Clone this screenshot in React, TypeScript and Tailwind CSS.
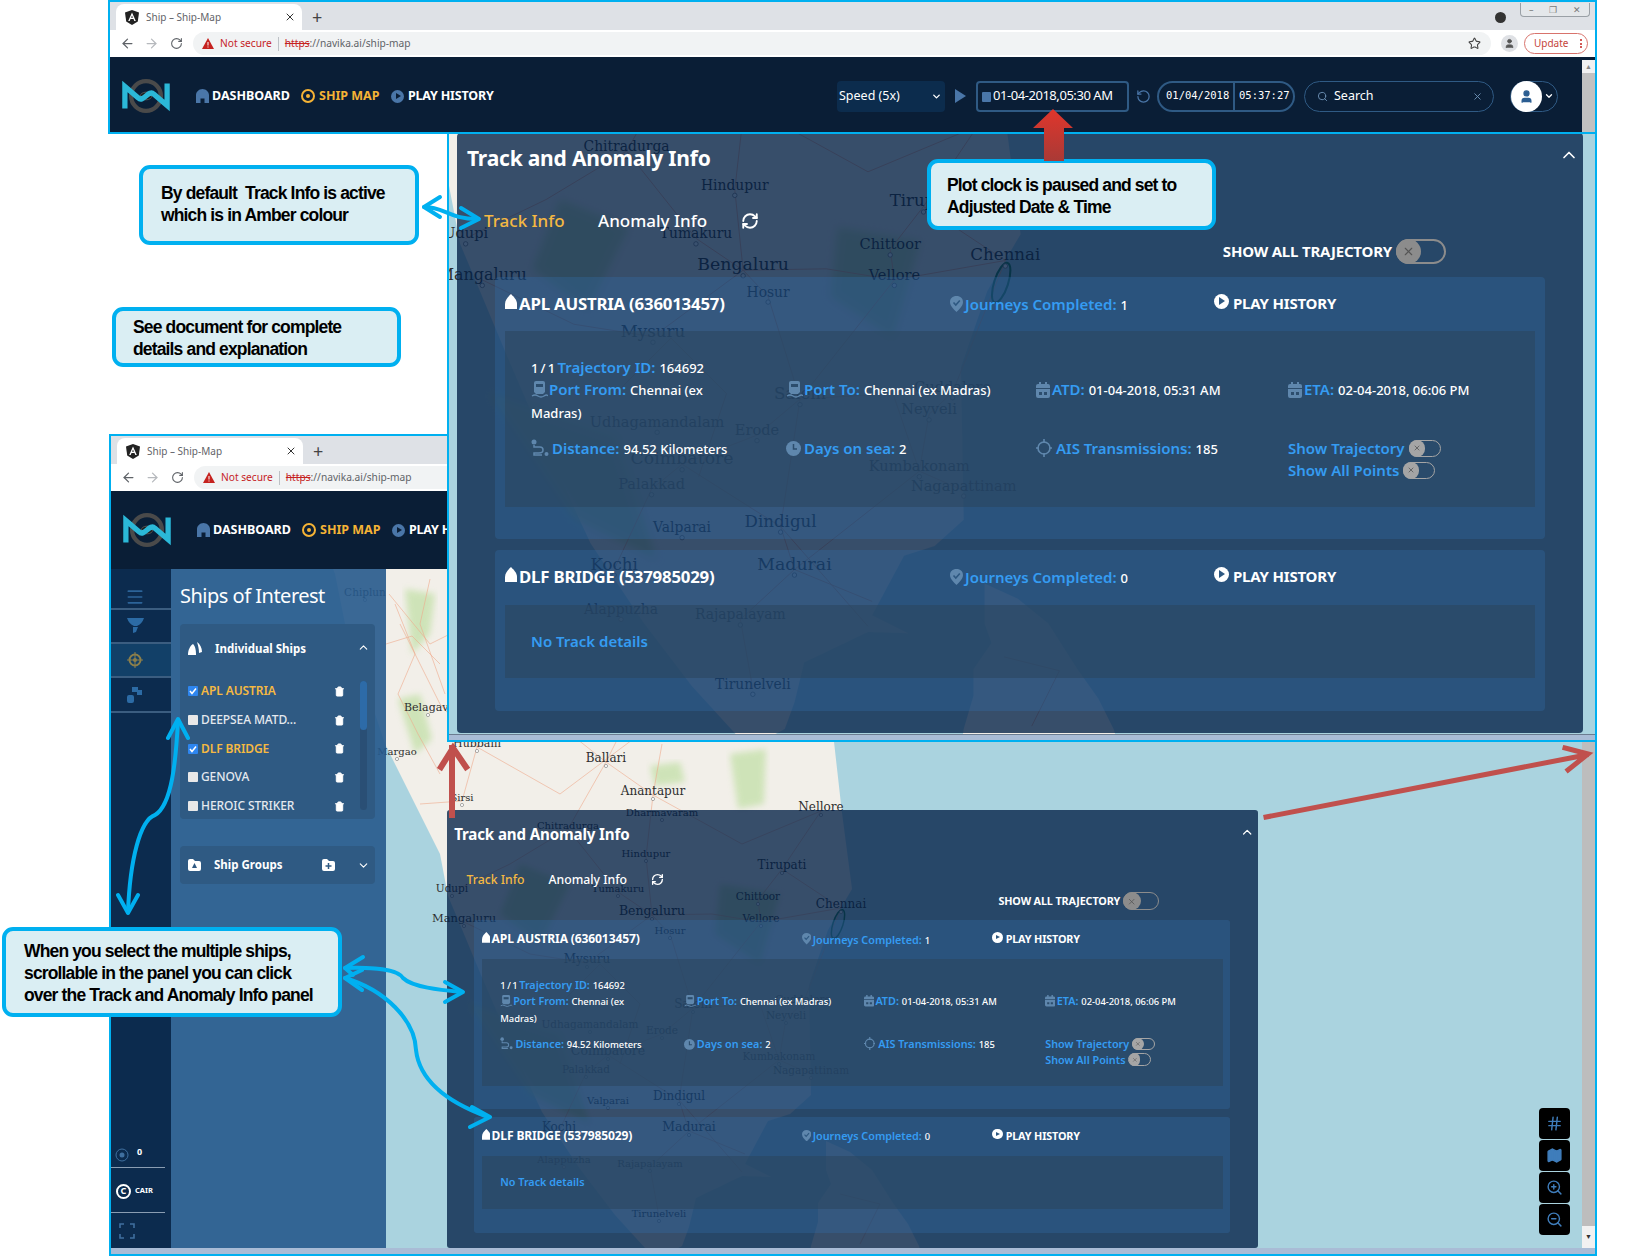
import { ArrowLeft, ArrowRight, ChevronDown, ChevronUp, Hash, Map as MapIcon, Menu, RefreshCw, RotateCw, Search, Star, Trash2, User, X, ZoomIn, ZoomOut } from "lucide-react";

const sans = "[font-family:'Noto_Sans',sans-serif]";

const coast =
  "M300 480 L335 570 L345 620 L365 680 L385 740 L405 780 L425 820 L440 850 L448 892 L459 918 L481 971 L515 1050 L542 1108 L580 1165 L615 1211 L656 1256 L682 1242 L689 1223 L696 1194 L742 1172 L771 1173 L745 1160 L768 1117 L790 1110 L811 1091 L809 981 L828 926 L852 885 L842 809 L832 720 L900 560 L950 480 Z";
const lanka = "M826 1137 L850 1148 L872 1166 L893 1199 L908 1220 L919 1242 L925 1262 L808 1262 L811 1242 L818 1218 L818 1199 L831 1180 L826 1166 Z";

const greens = [
  "M405 585 L435 590 L430 630 L412 650 Z",
  "M398 695 L420 690 L432 735 L415 750 Z",
  "M650 762 L680 758 L685 778 L655 782 Z",
  "M730 750 L766 745 L764 800 L738 805 Z",
  "M520 860 L570 880 L540 940 L500 910 Z",
  "M470 1000 L560 1030 L590 1120 L530 1090 Z",
  "M720 880 L780 890 L760 960 L715 930 Z",
];
const roads = [
  "M389 590 L430 640 L470 620 L520 690 L606 758 L653 791 L742 840 L821 807",
  "M400 620 L440 700 L477 743 L560 790 L600 760 L680 700",
  "M420 800 L462 797 L477 743 L510 680 L560 600",
  "M395 600 L415 650 L398 690 L418 730 L440 770",
  "M386 640 L412 632 L440 660 M430 575 L420 620 L445 690",
  "M452 888 L510 860 L568 825 L606 758 L640 690",
  "M464 918 L530 950 L587 959 L652 911 L618 888 L568 825",
  "M652 911 L646 853 L653 791 L662 740",
  "M652 911 L670 930 L693 1004 L662 1030 L608 1051 L586 1069 L559 1127",
  "M693 1004 L761 918 L758 896 L782 865 L821 807",
  "M841 904 L761 918 L712 910 L652 911",
  "M841 904 L803 999 L786 1015 L779 1056 L811 1070",
  "M693 1004 L679 1096 L689 1127 L650 1163 L659 1213",
  "M689 1127 L779 1056 L760 1000 L693 1004",
  "M782 865 L841 904",
  "M689 1127 L745 1150",
  "M608 1051 L679 1096 L742 1168",
  "M560 1000 L600 960 L640 1000 L620 1060",
  "M840 1190 L880 1200 L860 1240",
];
const places: [string, number, number, number][] = [
  ["Chiplun", 365, 592, 10.5],
  ["Belagavi", 428, 707, 11],
  ["Margao", 397, 751, 10],
  ["Hubballi", 477, 743, 11],
  ["Ballari", 606, 758, 12],
  ["Anantapur", 653, 791, 12],
  ["Sirsi", 462, 797, 10],
  ["Nellore", 821, 807, 12],
  ["Dharmavaram", 662, 812, 10],
  ["Chitradurga", 568, 825, 10],
  ["Hindupur", 646, 853, 10],
  ["Tirupati", 782, 865, 12],
  ["Tumakuru", 618, 888, 10],
  ["Udupi", 452, 888, 10.5],
  ["Chittoor", 758, 896, 10.5],
  ["Chennai", 841, 904, 12],
  ["Bengaluru", 652, 911, 12.5],
  ["Vellore", 761, 918, 10.5],
  ["Mangaluru", 464, 918, 11.5],
  ["Hosur", 670, 930, 10],
  ["Mysuru", 587, 959, 12],
  ["Salem", 693, 1004, 12],
  ["Cuddalore", 803, 999, 10.5],
  ["Neyveli", 786, 1015, 10.5],
  ["Udhagamandalam", 590, 1024, 10.5],
  ["Erode", 662, 1030, 10.5],
  ["Coimbatore", 608, 1051, 12.5],
  ["Kumbakonam", 779, 1056, 10.5],
  ["Palakkad", 586, 1069, 10.5],
  ["Nagapattinam", 811, 1070, 10.5],
  ["Dindigul", 679, 1096, 12],
  ["Valparai", 608, 1100, 10],
  ["Kochi", 559, 1127, 12],
  ["Madurai", 689, 1127, 12.5],
  ["Alappuzha", 564, 1159, 10],
  ["Rajapalayam", 650, 1163, 10],
  ["Tirunelveli", 659, 1213, 10],
];

function MapArt({ viewBox, minY = 0 }: { viewBox: string; minY?: number }) {
  return (
    <svg viewBox={viewBox} preserveAspectRatio="none" className="absolute inset-0 h-full w-full">
      <defs>
        <filter id="soft">
          <feGaussianBlur stdDeviation="3" />
        </filter>
      </defs>
      <rect x="0" y="0" width="1700" height="1300" fill="#aad3df" />
      <path d={coast} fill="#f2efe9" />
      <path d={lanka} fill="#f2efe9" />
      {greens.map((d) => (
        <path key={d} d={d} fill="#c3e0a8" opacity="0.75" filter="url(#soft)" />
      ))}
      {roads.map((d) => (
        <path key={d} d={d} fill="none" stroke="#efa98c" strokeWidth="0.6" />
      ))}
      <ellipse cx="838" cy="920" rx="5" ry="15" fill="none" stroke="#1e7a4c" strokeWidth="1.5" transform="rotate(18 838 920)" />
      {places
        .filter((p) => p[2] >= minY)
        .map(([name, x, y, size]) => (
          <g key={name}>
            <circle cx={x} cy={y + 4} r="1.6" fill="#fff" stroke="#777" strokeWidth="0.6" />
            <text x={x} y={y} fontSize={size} textAnchor="middle" fill="#2e2e2e" fontFamily="'DejaVu Serif', serif">
              {name}
            </text>
          </g>
        ))}
    </svg>
  );
}

function AngularMark() {
  return (
    <svg width="14" height="15" viewBox="0 0 14 15">
      <path d="M7 0 L14 2.5 L12.8 11.5 L7 15 L1.2 11.5 L0 2.5 Z" fill="#222" />
      <path d="M7 2.5 L10.8 11 H9.3 L8.5 9 H5.5 L4.7 11 H3.2 Z M6.1 7.7 H7.9 L7 5.5 Z" fill="#fff" fillRule="evenodd" />
    </svg>
  );
}

function BrowserChrome() {
  return (
    <div className={`${sans} shrink-0`}>
      <div className="flex h-[28px] items-end bg-[#dee1e6] pl-[6px]">
        <div className="flex h-[26px] w-[186px] items-center gap-[7px] rounded-t-lg bg-white pl-[9px] pr-[6px] text-[10px] text-[#5f6368]">
          <AngularMark />
          <span>Ship – Ship-Map</span>
          <X size={12} className="ml-auto text-[#333]" />
        </div>
        <span className="mb-[2px] ml-[10px] text-[18px] leading-[22px] text-[#444]">+</span>
      </div>
      <div className="flex h-[27px] items-center bg-white pl-[10px] pr-[7px]">
        <ArrowLeft size={15} className="text-[#5f6368]" />
        <ArrowRight size={15} className="ml-[9px] text-[#b6b9bd]" />
        <RotateCw size={13} className="ml-[11px] text-[#5f6368]" />
        <div className="ml-[10px] flex h-[23px] flex-1 items-center rounded-full bg-[#f1f3f4] pl-[9px] pr-[6px] text-[10.2px] text-[#5f6368]">
          <svg width="12" height="11" viewBox="0 0 12 11">
            <path d="M6 0 L12 11 H0 Z" fill="#c5221f" />
            <path d="M5.5 4 H6.5 V7.5 H5.5 Z M5.5 8.5 H6.5 V9.5 H5.5 Z" fill="#fff" />
          </svg>
          <span className="ml-[6px] text-[#c5221f]">Not secure</span>
          <span className="mx-[6px] h-[14px] w-px bg-[#bdc1c6]" />
          <span className="text-[#c5221f] line-through">https</span>
          <span>://navika.ai/ship-map</span>
          <Star size={13} className="ml-auto mr-[4px] text-[#444]" />
        </div>
        <div className="ml-[10px] flex h-[17px] w-[17px] items-center justify-center rounded-full bg-[#dfe1e5]">
          <User size={11} fill="#555" className="text-[#555]" />
        </div>
        <div className="ml-[6px] flex h-[21px] w-[64px] items-center justify-between rounded-full border border-[#d8736c] pl-[9px] pr-[5px] text-[10px] text-[#c5443a]">
          Update
          <span className="flex flex-col gap-[1.5px]">
            <i className="block h-[2px] w-[2px] rounded-full bg-[#c5221f]" />
            <i className="block h-[2px] w-[2px] rounded-full bg-[#c5221f]" />
            <i className="block h-[2px] w-[2px] rounded-full bg-[#c5221f]" />
          </span>
        </div>
      </div>
    </div>
  );
}

function NavikaLogo() {
  return (
    <svg width="48" height="36" viewBox="0 0 50 36" className="shrink-0">
      <circle cx="25" cy="18" r="15.5" fill="none" stroke="#4a4a4a" strokeWidth="4.5" />
      <ellipse cx="25" cy="18" rx="6" ry="4" fill="#1c1c1c" stroke="#555" />
      <path d="M3 31 V8 L17 20 C22 25 28 11 33 16 L47 28 V5" fill="none" stroke="#2bb8d8" strokeWidth="5.5" strokeLinejoin="miter" />
      <circle cx="25" cy="18" r="2" fill="#2bb8d8" />
    </svg>
  );
}

function AppBar({ className }: { className: string }) {
  return (
    <div className={`${sans} flex shrink-0 items-center bg-[#0a1e36] pl-[12px] text-white ${className}`}>
      <NavikaLogo />
      <div className="ml-[26px] flex items-center text-[12.5px] font-bold">
        <svg width="13" height="14" viewBox="0 0 13 14">
          <path d="M6.5 0 C3 0 0 3 0 6 V14 H4.5 V9.5 H8.5 V14 H13 V6 C13 3 10 0 6.5 0 Z" fill="#4a76a8" />
        </svg>
        <span className="ml-[3px] w-[89px]">DASHBOARD</span>
        <span className="flex h-[14px] w-[14px] items-center justify-center rounded-full border-2 border-[#f5b335]">
          <i className="block h-[4px] w-[4px] rounded-full bg-[#f5b335]" />
        </span>
        <span className="ml-[4px] w-[72px] text-[#f5b335]">SHIP MAP</span>
        <span className="flex h-[13px] w-[13px] items-center justify-center rounded-full bg-[#4a76a8]">
          <i className="ml-px block border-y-[3px] border-l-[5px] border-y-transparent border-l-[#0a1e36]" />
        </span>
        <span className="ml-[4px] tracking-[-0.2px]">PLAY HISTORY</span>
      </div>
      <div className="ml-auto flex h-[31px] items-center">
        <div className="flex h-[31px] w-[108px] items-center justify-between rounded bg-[#0c2c4d] pl-[2px] pr-[3px] text-[12.5px]">
          Speed (5x)
          <ChevronDown size={11} strokeWidth={3} />
        </div>
        <i className="ml-[10px] block border-y-[7px] border-l-[11px] border-y-transparent border-l-[#4a76a8]" />
        <div className="ml-[10px] flex h-[31px] w-[153px] items-center gap-[2px] rounded-sm border-2 border-[#2f5a84] pl-[4px] text-[13px] tracking-[-0.45px]">
          <svg width="9" height="11" viewBox="0 0 9 11">
            <path d="M1 1 H8 Q9 1 9 2 V10 Q9 11 8 11 H1 Q0 11 0 10 V2 Q0 1 1 1 Z" fill="#4a76a8" />
          </svg>
          01-04-2018,05:30 AM
        </div>
        <RotateCw size={15} className="ml-[7px] -scale-x-100 text-[#4a76a8]" />
        <div className="ml-[6px] flex h-[31px] w-[138px] items-center rounded-full border-2 border-[#2f5a84] font-['DejaVu_Sans_Mono',monospace] text-[10.5px]">
          <span className="w-[74px] pl-[7px]">01/04/2018</span>
          <span className="h-full w-[2px] bg-[#2f5a84]" />
          <span className="pl-[4px]">05:37:27</span>
        </div>
        <div className="ml-[9px] flex h-[31px] w-[190px] items-center rounded-full border border-[#2f5a84] pl-[12px] pr-[10px] text-[12.5px]">
          <Search size={11} className="text-[#6f93b8]" />
          <span className="ml-[6px]">Search</span>
          <X size={11} className="ml-auto text-[#6f93b8]" />
        </div>
        <div className="ml-[16px] flex h-[31px] w-[48px] items-center rounded-full border border-[#2f5a84]">
          <span className="flex h-[31px] w-[31px] items-center justify-center rounded-full bg-white">
            <User size={15} fill="#2b5d91" className="text-[#2b5d91]" />
          </span>
          <ChevronDown size={10} strokeWidth={3} className="ml-[2px]" />
        </div>
      </div>
      <div className="ml-[24px] flex h-full w-[13px] flex-col bg-[#f1f1f1]">
        <span className="h-[13px] text-center text-[7px] leading-[13px] text-[#888]">▲</span>
        <span className="flex-1 bg-[#c1c1c1]" />
      </div>
    </div>
  );
}

function ShipGlyph({ className = "" }: { className?: string }) {
  return (
    <svg width="12" height="15" viewBox="0 0 12 15" className={className}>
      <path d="M6 0 C9 3 12 6 12 10 V15 H0 V10 C0 6 3 3 6 0 Z" fill="#fff" />
    </svg>
  );
}

function PlayDot() {
  return (
    <span className="-mt-[5px] flex h-[15px] w-[15px] items-center justify-center rounded-full bg-white">
      <i className="ml-px block border-y-[4px] border-l-[6px] border-y-transparent border-l-[#2e5881]" />
    </span>
  );
}

function Toggle({ big }: { big?: boolean }) {
  return big ? (
    <div className="flex h-[25px] w-[50px] items-center rounded-full border-2 border-[#8c8c8c]">
      <span className="-ml-[2px] flex h-[25px] w-[25px] items-center justify-center rounded-full bg-[#8c8c8c] text-[#555]">
        <X size={13} />
      </span>
    </div>
  ) : (
    <div className="flex h-[17px] w-[32px] items-center rounded-full border border-[#a5a5a5]">
      <span className="-ml-px flex h-[17px] w-[16px] items-center justify-center rounded-full bg-[#a5a5a5] text-[#666]">
        <X size={8} strokeWidth={3} />
      </span>
    </div>
  );
}

function CalendarIcon() {
  return (
    <svg width="14" height="16" viewBox="0 0 14 16" className="mr-[2px] inline align-[-3px]">
      <path d="M3 0 H5 V2 H9 V0 H11 V2 H12 Q14 2 14 4 V14 Q14 16 12 16 H2 Q0 16 0 14 V4 Q0 2 2 2 H3 Z" fill="#5f87ad" />
      <path d="M0 6 H14 V7 H0 Z M3 10 H6 V13 H3 Z M8 10 H11 V13 H8 Z" fill="#2c4d6d" />
    </svg>
  );
}

function PortIcon() {
  return (
    <svg width="17" height="17" viewBox="0 0 17 17" className="mr-[1px] inline align-[-3px]">
      <path d="M5 0 H12 Q14 0 14 2 V11 L12 13 H5 L3 11 V2 Q3 0 5 0 Z" fill="#5f87ad" />
      <path d="M5 3 H12 V6 H5 Z" fill="#2c4d6d" />
      <path d="M1 15 Q4 13 7 15 T13 15 T17 15" fill="none" stroke="#5f87ad" strokeWidth="1.3" />
    </svg>
  );
}

function Label({ text, value }: { text: string; value?: string }) {
  return (
    <>
      <span className="text-[15px] font-semibold text-[#359cf2]">{text}</span>
      {value ? <span className="ml-[4px] text-[13px] font-medium text-white">{value}</span> : null}
    </>
  );
}

function ShipHeader({ name, journeys }: { name: string; journeys: string }) {
  return (
    <div className="flex h-[53px] items-center pl-[10px] pr-[10px] text-white">
      <ShipGlyph className="-mt-[4px] shrink-0" />
      <span className="ml-[2px] w-[431px] text-[16.8px] font-bold tracking-[-0.2px]">{name}</span>
      <svg width="13" height="16" viewBox="0 0 13 16" className="shrink-0">
        <path d="M6.5 0 C10.5 0 13 2.5 13 6 C13 10 9 13.5 6.5 16 C4 13.5 0 10 0 6 C0 2.5 2.5 0 6.5 0 Z" fill="#5f87ad" />
        <path d="M3.5 6.5 L5.8 9 L9.8 4.5" fill="none" stroke="#2e5881" strokeWidth="1.6" />
      </svg>
      <span className="ml-[2px] w-[249px]">
        <Label text="Journeys Completed:" value={journeys} />
      </span>
      <PlayDot />
      <span className="ml-[4px] text-[15px] font-bold tracking-[-0.2px]">PLAY HISTORY</span>
    </div>
  );
}

function TrackPanel({ className }: { className: string }) {
  return (
    <div className={`${sans} w-[1126px] rounded-sm bg-[#022047]/[.78] text-white ${className}`}>
      <h2 className="relative pl-[10px] pt-[12px] text-[21px] font-bold leading-[26px] tracking-[-0.2px]">
        Track and Anomaly Info
        <ChevronUp size={20} className="absolute right-[4px] top-[12px]" />
      </h2>
      <div className="mt-[38px] flex h-[24px] items-center pl-[27px] text-[17px] font-medium">
        <span className="w-[114px] text-[#f5b942]">Track Info</span>
        <span className="w-[143px]">Anomaly Info</span>
        <RefreshCw size={18} strokeWidth={2.5} />
      </div>
      <div className="mr-[137px] mt-[6px] flex h-[24px] items-center justify-end gap-[4px] text-[15px] font-bold tracking-[-0.2px]">
        SHOW ALL TRAJECTORY
        <Toggle big />
      </div>
      <section className="mx-[38px] mt-[14px] h-[262px] rounded-sm bg-[#3272af]/30">
        <ShipHeader name="APL AUSTRIA (636013457)" journeys="1" />
        <div className="mx-[10px] mt-px h-[176px] bg-[#2b465f]/60 pl-[26px] pt-[25px] leading-[22px]">
          <div className="h-[22px]">
            <span className="text-[13px] font-medium tracking-[-0.6px]">1 / 1 </span>
            <Label text="Trajectory ID:" value="164692" />
          </div>
          <div className="grid grid-cols-[255px_250px_252px_1fr]">
            <div className="pr-[60px]">
              <PortIcon />
              <Label text="Port From:" value="Chennai (ex Madras)" />
            </div>
            <div>
              <PortIcon />
              <Label text="Port To:" value="Chennai (ex Madras)" />
            </div>
            <div>
              <CalendarIcon />
              <Label text="ATD:" value="01-04-2018, 05:31 AM" />
            </div>
            <div>
              <CalendarIcon />
              <Label text="ETA:" value="02-04-2018, 06:06 PM" />
            </div>
          </div>
          <div className="mt-[13px] grid grid-cols-[255px_250px_252px_1fr]">
            <div className="flex items-start">
              <svg width="18" height="18" viewBox="0 0 18 18" className="mr-[3px] mt-[2px]">
                <circle cx="3" cy="3" r="2.5" fill="#5f87ad" />
                <circle cx="15.5" cy="15" r="2" fill="#5f87ad" />
                <path d="M3 6 V8 H9 Q12 8 12 11 T8 14 H3 V16 H11" fill="none" stroke="#5f87ad" strokeWidth="1.5" />
              </svg>
              <span>
                <Label text="Distance:" value="94.52 Kilometers" />
              </span>
            </div>
            <div className="flex items-start">
              <svg width="15" height="15" viewBox="0 0 15 15" className="mr-[3px] mt-[4px]">
                <circle cx="7.5" cy="7.5" r="7.5" fill="#5f87ad" />
                <path d="M7.5 3 V8 H11" fill="none" stroke="#2c4d6d" strokeWidth="1.5" />
              </svg>
              <span>
                <Label text="Days on sea:" value="2" />
              </span>
            </div>
            <div className="flex items-start">
              <svg width="16" height="18" viewBox="0 0 16 18" className="mr-[4px] mt-[2px]">
                <circle cx="8" cy="9" r="6" fill="none" stroke="#5f87ad" strokeWidth="1.6" />
                <path d="M8 0 V4 M8 14 V18 M0 9 H3 M13 9 H16" stroke="#5f87ad" strokeWidth="1.6" />
              </svg>
              <span>
                <Label text="AIS Transmissions:" value="185" />
              </span>
            </div>
            <div>
              <div className="flex h-[22px] items-center gap-[4px]">
                <Label text="Show Trajectory" />
                <Toggle />
              </div>
              <div className="flex h-[22px] items-center gap-[4px]">
                <Label text="Show All Points" />
                <Toggle />
              </div>
            </div>
          </div>
        </div>
      </section>
      <section className="mx-[38px] mt-[11px] h-[161px] rounded-sm bg-[#3272af]/30">
        <ShipHeader name="DLF BRIDGE (537985029)" journeys="0" />
        <div className="mx-[10px] mt-[2px] flex h-[73px] items-center bg-[#2b465f]/60 pl-[26px]">
          <Label text="No Track details" />
        </div>
      </section>
    </div>
  );
}

function Sidebar() {
  return (
    <aside className={`${sans} relative flex w-[60px] shrink-0 flex-col bg-[#0c2b4e] text-[#2c6499]`}>
      <div className="flex h-[41px] items-end justify-center border-b-2 border-[#3b5d80] pb-px pr-[12px]">
        <Menu size={20} />
      </div>
      <div className="flex h-[34px] items-center justify-center border-b-2 border-[#3b5d80] pr-[12px]">
        <svg width="17" height="16" viewBox="0 0 17 16">
          <path d="M0 0 H17 Q15 6 10 8 H7 Q2 6 0 0 Z M6 9 H11 L9 14 L6 15 Z" fill="#2c6ba5" />
        </svg>
      </div>
      <div className="flex h-[34px] items-center justify-center border-b-2 border-[#3b5d80] bg-[#124068] pr-[12px]">
        <svg width="16" height="16" viewBox="0 0 16 16">
          <circle cx="8" cy="8" r="5.5" fill="none" stroke="#8c7f4a" strokeWidth="2" />
          <circle cx="8" cy="8" r="2" fill="#8c7f4a" />
          <path d="M8 0 V16 M0 8 H16" stroke="#8c7f4a" strokeWidth="1" />
        </svg>
      </div>
      <div className="flex h-[35px] items-center justify-center border-b-2 border-[#3b5d80] pr-[12px]">
        <svg width="16" height="16" viewBox="0 0 16 16">
          <path d="M5 0 H11 V3 H15 V8 H10 V5 H5 Z M0 10 Q0 8 2 8 H5 Q7 8 7 10 V14 Q7 16 5 16 H2 Q0 16 0 14 Z" fill="#2c6ba5" />
        </svg>
      </div>
      <div className="mb-[6px] mt-auto">
        <div className="mr-[6px] flex h-[34px] items-start border-b border-[#8a9db2] pl-[4px] pt-[11px] text-[9px] font-bold text-white">
          <svg width="14" height="14" viewBox="0 0 14 14" className="mt-[3px]">
            <circle cx="7" cy="7" r="6" fill="none" stroke="#3f6f9f" />
            <circle cx="7" cy="7" r="2.5" fill="#3f6f9f" />
          </svg>
          <span className="ml-[8px]">0</span>
        </div>
        <div className="mr-[6px] flex h-[45px] items-center border-b border-[#8a9db2] pl-[5px] pt-[2px] text-white">
          <span className="flex h-[15px] w-[15px] items-center justify-center rounded-full border-2 border-white text-[9px] font-bold">C</span>
          <span className="ml-[4px] text-[7.5px] font-bold">CAIR</span>
        </div>
        <div className="flex h-[35px] items-center pl-[8px]">
          <svg width="16" height="16" viewBox="0 0 16 16" fill="none" stroke="#3f6f9f" strokeWidth="1.6">
            <path d="M1 5 V1 H5 M11 1 H15 V5 M15 11 V15 H11 M5 15 H1 V11" />
          </svg>
        </div>
      </div>
    </aside>
  );
}

function ShipRow({ name, on }: { name: string; on?: boolean }) {
  return (
    <div className="flex h-[28.7px] items-center pl-[8px]">
      <span className={`flex h-[10px] w-[10px] items-center justify-center rounded-[1px] ${on ? "bg-[#2e86f0]" : "bg-[#e8e8e8]"}`}>
        {on ? (
          <svg width="8" height="8" viewBox="0 0 8 8">
            <path d="M1 4 L3 6.5 L7 1.5" fill="none" stroke="#fff" strokeWidth="1.5" />
          </svg>
        ) : null}
      </span>
      <span className={`ml-[3px] w-[133px] text-[12px] font-medium tracking-[-0.1px] ${on ? "font-semibold text-[#f5b942]" : "text-[#e4e9ef]"}`}>{name}</span>
      <Trash2 size={11} fill="#fff" className="text-white" />
    </div>
  );
}

function ShipsPanel() {
  return (
    <div className={`${sans} relative w-[215px] shrink-0 bg-[#26598c]/90 pl-[9px] pr-[11px] text-white`}>
      <h2 className="pt-[12px] text-[20px] leading-[30px] tracking-[-0.5px]">Ships of Interest</h2>
      <div className="relative mt-[13px] h-[195px] rounded bg-[#2f5a83]">
        <div className="flex h-[53px] items-center pb-[4px] pl-[8px] text-[11.5px] font-bold">
          <svg width="14" height="13" viewBox="0 0 14 13">
            <path d="M5 2 C7 4 8 7 8 13 H0 C0 8 2 4 5 2 Z M9 0 C12 2 14 6 14 10 L11 11 C11 7 10 3 9 0 Z" fill="#fff" />
          </svg>
          <span className="ml-[13px]">Individual Ships</span>
          <ChevronUp size={13} className="absolute right-[5px] top-[17px]" />
        </div>
        <ShipRow name="APL AUSTRIA" on />
        <ShipRow name="DEEPSEA MATD..." />
        <ShipRow name="DLF BRIDGE" on />
        <ShipRow name="GENOVA" />
        <ShipRow name="HEROIC STRIKER" />
        <div className="absolute right-[8px] top-[57px] h-[129px] w-[7px] rounded-full bg-[#2a4f75]">
          <div className="h-[49px] rounded-full bg-[#2d6ba8]" />
        </div>
      </div>
      <div className="mt-[27px] flex h-[38px] items-center rounded bg-[#2f5a83] pl-[8px] pr-[5px] text-[11.5px] font-bold">
        <svg width="13" height="12" viewBox="0 0 13 12">
          <path d="M0 2 Q0 0 2 0 H5 L7 2 H11 Q13 2 13 4 V10 Q13 12 11 12 H2 Q0 12 0 10 Z" fill="#fff" />
          <path d="M6.5 4 L9 9 H4 Z" fill="#2f5a83" />
        </svg>
        <span className="ml-[13px]">Ship Groups</span>
        <svg width="13" height="12" viewBox="0 0 13 12" className="ml-auto">
          <path d="M0 2 Q0 0 2 0 H5 L7 2 H11 Q13 2 13 4 V10 Q13 12 11 12 H2 Q0 12 0 10 Z" fill="#fff" />
          <path d="M6.5 4 V10 M3.5 7 H9.5" stroke="#2f5a83" strokeWidth="1.5" />
        </svg>
        <ChevronDown size={13} className="ml-[22px]" />
      </div>
    </div>
  );
}

function MapButtons() {
  const items = [Hash, MapIcon, ZoomIn, ZoomOut];
  return (
    <div className="absolute right-[25px] top-[539px] flex flex-col gap-px">
      {items.map((Icon, i) => (
        <span key={i} className="flex h-[31px] w-[31px] items-center justify-center rounded bg-black">
          <Icon size={17} className="text-[#3f7dbb]" fill={i === 1 ? "#3f7dbb" : "none"} />
        </span>
      ))}
    </div>
  );
}

function Callout({ children, className }: { children: React.ReactNode; className: string }) {
  return (
    <div className={`absolute rounded-[11px] border-4 border-[#00b0f0] bg-[#daeef3] font-['Liberation_Sans',sans-serif] text-[17.5px] font-bold leading-[22px] tracking-[-0.85px] text-black ${className}`}>
      {children}
    </div>
  );
}

function Arrows() {
  return (
    <svg width="1626" height="1257" viewBox="0 0 1626 1257" className="pointer-events-none absolute inset-0">
      <defs>
        <linearGradient id="redUp" x1="0" y1="0" x2="0" y2="1">
          <stop offset="0" stopColor="#e0362c" />
          <stop offset="1" stopColor="#a93a36" />
        </linearGradient>
      </defs>
      <g fill="none" stroke="#00b0f0" strokeWidth="4" strokeLinecap="round" strokeLinejoin="round">
        <path d="M424 207 C 445 207 448 219 478 219" />
        <path d="M440 197 L424 207 L440 217 M461 208 L479 219 L461 228" />
        <path d="M178 720 C 176 760 172 805 155 815 C 140 820 130 860 128 912" />
        <path d="M168 738 L178 719 L188 738 M118 895 L128 913 L138 895" />
        <path d="M345 968 C 375 967 398 970 403 978 C 412 987 440 990 461 992" />
        <path d="M363 957 L345 968 L353 975 M445 982 L463 992 L445 1002" />
        <path d="M345 978 C 385 990 415 1020 416 1050 C 420 1085 455 1105 488 1117" />
        <path d="M362 970 L345 978 L362 990 M472 1107 L490 1117 L470 1127" />
      </g>
      <path d="M1053 109 L1073 128 H1064 V161 H1044 V128 H1033 Z" fill="url(#redUp)" />
      <g fill="none" stroke="#c0504d" strokeLinecap="square">
        <path d="M452 815 V748 M441 767 L453 748 L466 767" strokeWidth="6" />
        <path d="M1266 817 L1586 755 M1565 748 L1588 754 L1568 770" strokeWidth="5" />
      </g>
    </svg>
  );
}

export default function App() {
  return (
    <div className="relative h-[1257px] w-[1626px] overflow-hidden bg-white">
      {/* lower browser window */}
      <div className="absolute left-[109px] top-[434px] flex h-[822px] w-[1488px] flex-col border-2 border-[#00b0f0] bg-white">
        <BrowserChrome />
        <AppBar className="h-[78px]" />
        <div className="relative flex flex-1">
          <MapArt viewBox="111 565 1484 685" />
          <Sidebar />
          <ShipsPanel />
          <div className="absolute bottom-[6px] right-0 flex h-[510px] w-[13px] flex-col bg-[#f1f1f1]">
            <span className="flex-1 bg-[#bdbdbd]" />
            <span className="h-[22px] text-center text-[7px] leading-[22px] text-[#333]">▼</span>
          </div>
          <MapButtons />
          <div className="absolute inset-x-0 bottom-0 h-[6px] bg-[#a9bcd6]" />
          <div className="absolute left-[336px] top-[241px]">
            <div className="[zoom:0.72]">
              <TrackPanel className="h-[609px] pt-[9px]" />
            </div>
          </div>
        </div>
      </div>

      {/* zoomed copy of the info panel */}
      <div className="absolute left-[447px] top-[131px] h-[611px] w-[1150px] overflow-hidden border-2 border-[#00b0f0]">
        <MapArt viewBox="440 812 826 438" minY={820} />
        <div className="relative ml-[8px] h-[600px]">
          <TrackPanel className="h-[600px]" />
        </div>
        <div className="absolute inset-x-0 bottom-0 h-[6px] border-t border-[#6b7c90] bg-[#a9bcd6]" />
      </div>

      {/* upper browser window */}
      <div className="absolute left-[108px] top-0 flex h-[134px] w-[1489px] flex-col border-2 border-[#00b0f0]">
        <BrowserChrome />
        <AppBar className="h-[75px] pt-[3px]" />
        <div className="absolute right-[5px] top-[1px] flex h-[14px] w-[70px] items-center justify-around rounded-b-sm border border-t-0 border-[#9aa0a6] bg-[#e4e7ea] text-[9px] leading-none text-[#777]">
          <span>–</span>
          <span>❐</span>
          <span>✕</span>
        </div>
        <span className="absolute right-[89px] top-[10px] h-[11px] w-[11px] rounded-full bg-[#333]" />
      </div>

      <Callout className="left-[139px] top-[165px] h-[80px] w-[280px] pl-[18px] pt-[13px]">
        By default&nbsp; Track Info is active
        <br />
        which is in Amber colour
      </Callout>
      <Callout className="left-[112px] top-[307px] h-[60px] w-[289px] pl-[17px] pt-[5px]">
        See document for complete
        <br />
        details and explanation
      </Callout>
      <Callout className="left-[927px] top-[159px] h-[71px] w-[289px] pl-[16px] pt-[11px]">
        Plot clock is paused and set to
        <br />
        Adjusted Date &amp; Time
      </Callout>
      <Callout className="left-[2px] top-[927px] h-[90px] w-[340px] pl-[18px] pt-[9px]">
        When you select the multiple ships,
        <br />
        scrollable in the panel you can click
        <br />
        over the Track and Anomaly Info panel
      </Callout>
      <Arrows />
    </div>
  );
}
